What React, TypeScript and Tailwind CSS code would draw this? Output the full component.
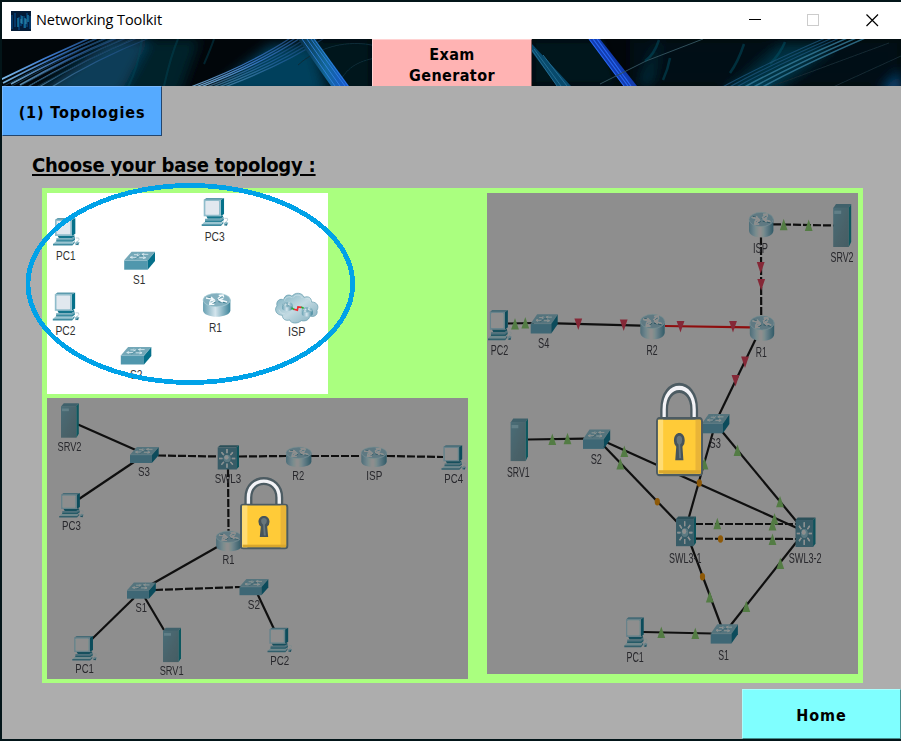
import React from 'react';

type Box = [number, number, number, number];
type Kind = 'pc' | 'switch' | 'router' | 'server' | 'l3' | 'cloud';
type Device = { kind: Kind; box: Box; label: string; lx: number; lw: number; ly: number };
type Link = { p: Box; dash?: boolean; red?: boolean };

const SIZE: Record<Kind, [number, number]> = {
  pc: [81, 84],
  switch: [92, 54],
  router: [84, 72],
  server: [52, 104],
  l3: [62, 70],
  cloud: [130, 90],
};

function Arrows() {
  return (
    <g fill="none" stroke="#f4fafc" strokeWidth="4">
      <path d="M14 13 L32 17 M47 26 L72 30 M44 19 L56 11 M26 33 L40 26" stroke="#3f7f92" strokeWidth="3" />
      <path d="M10 15 L32 19 M25 12 L34 20 L22 24" />
      <path d="M73 27 L50 20 M60 28 L49 20 L62 16" />
      <path d="M45 17 L58 7 M48 7 L61 6 L63 13" />
      <path d="M38 23 L24 32 M22 25 L21 34 L35 34" />
    </g>
  );
}

function RouterShape() {
  return (
    <g>
      <path d="M1 20 V52 C1 78 83 78 83 52 V20 Z" fill="url(#metal)" />
      <ellipse cx="42" cy="21" rx="41" ry="20" fill="#83b0bf" stroke="#acd0da" strokeWidth="2" />
      <Arrows />
    </g>
  );
}

function Shape({ kind }: { kind: Kind }) {
  if (kind === 'pc')
    return (
      <g>
        <path d="M6 6 L14 0 H66 L57 6 Z" fill="#5d9bae" />
        <path d="M57 6 L67 0 V48 L57 55 Z" fill="#05718a" />
        <rect x="6" y="5" width="51" height="50" fill="#8fbccb" />
        <rect x="11" y="9" width="41" height="41" rx="2" fill="#e1e8ef" />
        <path d="M14 55 H58 L64 52 V58 L56 62 H18 Z" fill="#14758c" />
        <path d="M10 62 H55 L66 56 V65 L57 72 H10 Z" fill="#6ba5b6" />
        <path d="M10 68 H57 L66 62 V67 L58 73 H10 Z" fill="#2c8499" />
        <path d="M8 72 H61 L57 80 H0 Z" fill="#9bc5d1" />
        <path d="M0 79 H58 L65 70 V76 L58 84 H0 Z" fill="#3f8ba0" />
        <path d="M68 61 H77 L78 66 L72 73" fill="none" stroke="#b4c9d1" strokeWidth="2.5" />
        <path d="M66 76 L72 71 L80 74 L76 82 L68 83 Z" fill="#8cbac7" />
        <path d="M67 81 L77 76 L76 83 Z" fill="#28748a" />
      </g>
    );
  if (kind === 'switch')
    return (
      <g>
        <path d="M0 26 L22 0 H92 L70 26 Z" fill="#74a8b8" />
        <rect x="0" y="26" width="70" height="28" fill="#5097ad" />
        <path d="M70 26 L92 0 V28 L70 54 Z" fill="#05708a" />
        <g fill="none" stroke="#dcebf0" strokeWidth="2.5">
          <path d="M29 9 H45 M39 6 L46 9 L38 12" />
          <path d="M53 8 H72 M60 5 L53 8 L59 11" />
          <path d="M18 17 H37 M25 14 L18 17 L25 20" />
          <path d="M45 18 H64 M57 15 L64 18 L56 21" />
        </g>
        <path d="M40 6 L48 12 H56 M31 22 L44 15" stroke="#397c90" strokeWidth="1.5" fill="none" />
        <path d="M0 26.5 H70 L91 1" stroke="#acced8" strokeWidth="1" fill="none" />
      </g>
    );
  if (kind === 'router') return <RouterShape />;
  if (kind === 'server')
    return (
      <g>
        <path d="M0 10 L8 0 H52 L44 10 Z" fill="#568e9e" />
        <rect x="0" y="9" width="45" height="95" fill="url(#tower)" />
        <path d="M45 9 L52 0 V92 L45 104 Z" fill="#05828f" />
        <rect x="3" y="16" width="20" height="8" fill="#86b8c6" />
      </g>
    );
  if (kind === 'l3')
    return (
      <g>
        <path d="M0 6 L7 0 H62 L54 6 Z" fill="#377584" />
        <path d="M54 6 L62 0 V62 L54 70 Z" fill="#057c8b" />
        <rect x="0" y="6" width="55" height="64" fill="#4a8699" />
        <g stroke="#edf7f9" strokeWidth="4">
          <path d="M27 11 V23 M27 53 V65 M4 38 H14 M41 38 H51 M11 20 L18 28 M44 20 L37 28 M11 56 L18 48 M44 56 L37 48" />
        </g>
        <circle cx="27.500" cy="38" r="10.500" fill="#7fb0bd" />
        <circle cx="25.500" cy="35" r="6" fill="#d3e6ec" />
      </g>
    );
  return (
    <g>
      <path
        d="M22 66 C4 66 -4 48 6 38 C2 22 16 14 26 20 C28 4 44 2 51 9 C60 -5 83 -2 87 12 C102 7 109 14 110 26 C127 26 133 40 126 51 C130 66 116 73 105 68 C101 84 86 84 79 82 C67 93 48 91 44 80 C32 84 22 77 22 66 Z"
        fill="url(#cloudFill)"
        stroke="#5f98aa"
        strokeWidth="2"
      />
      <path d="M28 22 C32 10 44 8 51 13 M54 13 C62 1 78 5 82 14 M91 17 C101 12 107 20 107 27 M12 49 C14 59 25 62 29 61" stroke="#d1e5eb" strokeWidth="2" fill="none" />
      <g transform="translate(21 26) scale(.38)"><RouterShape /></g>
      <g transform="translate(80 41) scale(.4)"><RouterShape /></g>
      <path d="M50 44 L58 49 M86 45 L78 41" stroke="#27ae35" strokeWidth="5" />
      <path d="M57 48 L67 51 L69 41 L79 42" stroke="#ed2b32" strokeWidth="5" fill="none" />
    </g>
  );
}

function Lock({ x, y, w, h }: { x: number; y: number; w: number; h: number }) {
  return (
    <g transform={`translate(${x} ${y}) scale(${w / 144} ${h / 220})`}>
      <path d="M25 88 V64 C25 -3 117 -3 117 64 V88" fill="none" stroke="#4c5b62" strokeWidth="24" />
      <path d="M25 88 V64 C25 -3 117 -3 117 64 V88" fill="none" stroke="#f3f3f7" strokeWidth="10" />
      <rect x="3" y="85" width="138" height="132" rx="7" fill="#ffcb38" stroke="#4c5b62" strokeWidth="6" />
      <rect x="6" y="88" width="16" height="126" fill="#ffdc73" />
      <rect x="121" y="88" width="16" height="126" fill="#e9b437" />
      <rect x="8" y="206" width="129" height="7" fill="#d9a72d" />
      <path d="M55 137 C55 113 88 113 88 137 Q88 147 81 151 L84 183 H59 L62 151 Q55 147 55 137 Z" fill="#46545b" />
      <path d="M63 134 C63 123 80 123 80 134 Q80 143 74 146 L77 178 H71 L69 146 Q63 143 63 134 Z" fill="#68767b" />
    </g>
  );
}

function Topology({
  view, devices, links = [], up = [], down = [], dots = [], font, dimmed, lock,
}: {
  view: Box; devices: Device[]; links?: Link[]; up?: number[][]; down?: number[][]; dots?: number[][];
  font: number; dimmed?: boolean; lock?: Box;
}) {
  const [x, y, w, h] = view;
  return (
    <svg className="block shrink-0 bg-white" width={w} height={h} viewBox={view.join(' ')}>
      {links.map(({ p, dash, red }, i) => (
        <line key={i} x1={p[0]} y1={p[1]} x2={p[2]} y2={p[3]} stroke={red ? '#ff1818' : '#1c1c1c'} strokeWidth="2.200" strokeDasharray={dash ? '8 2' : undefined} />
      ))}
      <g className={dimmed ? 'brightness-[1.25] saturate-[0.85]' : ''}>
        {devices.map((d, i) => (
          <g key={i} transform={`translate(${d.box[0]} ${d.box[1]}) scale(${d.box[2] / SIZE[d.kind][0]} ${d.box[3] / SIZE[d.kind][1]})`}>
            <Shape kind={d.kind} />
          </g>
        ))}
      </g>
      {devices.map((d, i) => (
        <text key={i} x={d.lx} y={d.ly} textLength={d.lw} lengthAdjust="spacingAndGlyphs" fontSize={font} fill={dimmed ? '#484850' : '#303030'} fontFamily="Liberation Sans, sans-serif">{d.label}</text>
      ))}
      {up.map(([a, b], i) => <path key={i} d={`M${a - 3.9} ${b + 5.5} L${a} ${b - 6} L${a + 3.9} ${b + 5.5} Z`} fill="#96df7a" />)}
      {down.map(([a, b], i) => <path key={i} d={`M${a - 3.9} ${b - 5.5} L${a} ${b + 6} L${a + 3.9} ${b - 5.5} Z`} fill="#ef4963" />)}
      {dots.map(([a, b], i) => <ellipse key={i} cx={a} cy={b} rx="2.600" ry="3.700" fill="#ffa00e" />)}
      {dimmed && <rect x={x} y={y} width={w} height={h} fill="#000" fillOpacity="0.443" />}
      {lock && <Lock x={lock[0]} y={lock[1]} w={lock[2]} h={lock[3]} />}
    </svg>
  );
}

const d = (kind: Kind, box: Box, label: string, lx: number, lw: number, ly: number): Device => ({ kind, box, label, lx, lw, ly });

const basic: Device[] = [
  d('pc', [53, 218, 27, 27.5], 'PC1', 56, 19.5, 260),
  d('pc', [52.8, 292.5, 27, 28], 'PC2', 55.5, 20, 335),
  d('pc', [201.7, 198, 27, 28], 'PC3', 204.7, 20, 241),
  d('switch', [124.2, 251.7, 30.8, 18], 'S1', 133, 12.3, 284),
  d('switch', [120.8, 347, 30.5, 17.5], 'S2', 130, 12.5, 379),
  d('router', [202.7, 293, 28, 24], 'R1', 209, 13, 331.5),
  d('cloud', [275, 293.3, 43.3, 30], 'ISP', 288, 17.5, 335.5),
];

const medium: Device[] = [
  d('server', [61, 403.2, 17.8, 34.5], 'SRV2', 57.5, 24, 451),
  d('switch', [130, 447, 28.7, 16], 'S3', 138, 12, 476),
  d('l3', [217.7, 445.3, 21.3, 24.2], 'SWL3', 214.7, 26.5, 482.7),
  d('pc', [59.2, 493, 25, 24.5], 'PC3', 62, 18.8, 530),
  d('router', [215.8, 530.7, 26, 20.7], 'R1', 222.5, 12, 564),
  d('switch', [127, 582.5, 28.8, 16.2], 'S1', 135.5, 11.5, 611.5),
  d('switch', [239.5, 579, 28.8, 16.2], 'S2', 247.8, 12.2, 608.5),
  d('pc', [72.3, 636, 25, 24.5], 'PC1', 75.3, 18.5, 673),
  d('server', [163, 627.8, 18, 34.3], 'SRV1', 159.7, 24, 675),
  d('pc', [267.5, 627.7, 25, 24.5], 'PC2', 270.3, 19, 665),
  d('router', [285.7, 446.7, 26, 20.6], 'R2', 292.3, 12, 480),
  d('router', [361, 446.7, 26, 20.6], 'ISP', 366.3, 16, 480),
  d('pc', [441.5, 445.3, 25, 24.5], 'PC4', 444.3, 18.7, 482.7),
];

const mediumLinks: Link[] = [
  { p: [78, 424.5, 138, 451] }, { p: [134, 462, 79, 499] }, { p: [158, 455.5, 218, 456.5], dash: true },
  { p: [239, 456.5, 286, 456], dash: true }, { p: [311, 456, 361, 456], dash: true }, { p: [387, 456, 443, 457], dash: true },
  { p: [228, 469, 228.5, 531], dash: true }, { p: [218, 546.5, 152, 584] }, { p: [155, 590, 241, 587], dash: true },
  { p: [134, 598, 92, 639] }, { p: [145, 598, 164, 630] }, { p: [257.5, 594, 274, 629] },
];

const advanced: Device[] = [
  d('pc', [488, 310, 24, 30.3], 'PC2', 490.7, 17.5, 355.3),
  d('switch', [530.7, 314.3, 27, 19.2], 'S4', 538, 11.3, 348),
  d('router', [640, 314, 25, 25.5], 'R2', 646.5, 11.2, 354.7),
  d('router', [748.7, 212, 25, 25.6], 'ISP', 753, 15, 253),
  d('server', [833.2, 204, 18, 43], 'SRV2', 830.5, 23, 262),
  d('router', [749.5, 315.5, 25, 25.6], 'R1', 755.7, 11, 356.7),
  d('server', [510.6, 418.4, 17.4, 42.7], 'SRV1', 507, 22.5, 476.5),
  d('switch', [583, 429.6, 27.2, 19.3], 'S2', 590.7, 11.3, 463.5),
  d('switch', [702.2, 414, 27.2, 19.3], 'S3', 709.5, 11.3, 448),
  d('l3', [676, 516.5, 20, 29.7], 'SWL3-1', 669, 32.5, 562.5),
  d('l3', [795.5, 517.5, 20, 29.5], 'SWL3-2', 788.7, 33, 562.5),
  d('pc', [624.3, 617.3, 23.5, 30], 'PC1', 626.5, 17.3, 662),
  d('switch', [710.7, 624.3, 27.2, 19.3], 'S1', 718.2, 10.7, 659.5),
];

const advancedLinks: Link[] = [
  { p: [508, 323.5, 534, 323] }, { p: [557, 323.3, 641, 325.7] }, { p: [665, 326, 750, 327.3], red: true },
  { p: [761, 237, 761.2, 316], dash: true }, { p: [773, 224.3, 834, 225.5], dash: true },
  { p: [755.7, 339, 719, 415] }, { p: [722.5, 432, 797, 522] }, { p: [713, 432, 689, 517] },
  { p: [607, 442.5, 797, 528] }, { p: [604, 446, 677, 522] }, { p: [528, 439.5, 584, 438.7] },
  { p: [695, 524, 796, 524], dash: true }, { p: [695, 538.7, 796, 539], dash: true },
  { p: [691, 545, 721, 625.5] }, { p: [796.5, 542, 730, 626] }, { p: [643, 632, 712, 633.5] },
];

const upMarks = [[515, 324], [525.3, 323], [783.7, 224.7], [808.7, 225.5], [552.3, 439.5], [567.5, 438.7], [624.3, 451.5], [620.3, 464], [737.5, 450.5], [704.5, 464], [780, 501.7], [774.5, 519], [772.5, 525], [772.5, 539.5], [717.3, 523.7], [780.3, 563.5], [746.3, 606.5], [709.8, 597], [661.3, 632.5], [695.3, 633.5]];
const downMarks = [[578.3, 324], [623.7, 325], [680.5, 326.5], [733, 326.5], [760.7, 267.5], [761.2, 284.5], [745, 362], [735.5, 380.5]];
const dotMarks = [[657.3, 501.7], [699.3, 483], [720.5, 539], [702.5, 576.7]];

function Defs() {
  return (
    <svg className="absolute h-0 w-0">
      <defs>
        <linearGradient id="metal"><stop offset="0" stopColor="#68a0b2" /><stop offset=".45" stopColor="#d4e5ed" /><stop offset="1" stopColor="#3d849a" /></linearGradient>
        <linearGradient id="tower" x1="0" y1="0" x2="1" y2="1"><stop stopColor="#629fb1" /><stop offset=".6" stopColor="#648e9a" /><stop offset="1" stopColor="#5d8792" /></linearGradient>
        <linearGradient id="cloudFill" x1="0" y1="0" x2="1" y2="1"><stop stopColor="#78aebe" /><stop offset=".5" stopColor="#c3dae2" /><stop offset="1" stopColor="#7eacbc" /></linearGradient>
      </defs>
    </svg>
  );
}

function Banner() {
  return (
    <svg className="block" width="899" height="47" viewBox="2 39 899 47">
      <defs>
        <filter id="soft" x="-30%" y="-50%" width="160%" height="200%"><feGaussianBlur stdDeviation="6" /></filter>
        <filter id="hair" x="-10%" y="-10%" width="120%" height="120%"><feGaussianBlur stdDeviation=".35" /></filter>
        <linearGradient id="streak" x1="0" y1="1" x2="1" y2="0"><stop stopColor="#86c4ee" /><stop offset=".55" stopColor="#3c78cc" /><stop offset="1" stopColor="#1f4c80" /></linearGradient>
        <linearGradient id="fallA" x1="0" x2="1" y1="0" y2="0"><stop stopColor="#082d42" /><stop offset=".55" stopColor="#13689a" /><stop offset="1" stopColor="#1854d6" /></linearGradient>
      </defs>
      <rect x="2" y="39" width="899" height="47" fill="#01060a" />
      <g filter="url(#soft)">
        <path d="M35 95 L110 39 H165 L125 95 Z" fill="#073d58" />
        <path d="M120 95 L150 39 H200 L180 95 Z" fill="#02202b" />
        <path d="M205 95 L270 45 H315 L330 95 Z" fill="#06405c" />
        <path d="M325 95 L310 39 H372 V95 Z" fill="#02141b" />
        <path d="M532 39 H600 L620 86 H532 Z" fill="#03171f" />
        <path d="M640 86 L660 35 L650 86 M722 96 L780 45 H835 L770 96 Z" fill="#084560" />
        <path d="M630 39 H901 V86 H630 Z" fill="#031c26" opacity=".5" />
        <path d="M880 92 L901 72 V95 Z" fill="#0c4d80" />
      </g>
      <g fill="none" filter="url(#hair)">
        {[0, 7, 15, 24, 33, 43, 54].map((n, i) => (
          <path key={n} d={`M${-4 + n} ${82 + i} Q${42 + n} 59 ${90 + n * 1.1} 38`} stroke="url(#streak)" strokeWidth={i < 4 ? 1.9 : 1.3} opacity={1 - i * 0.1} />
        ))}
        {[4, 12, 20, 29, 38].map((n) => (
          <path key={n} d={`M${-2 + n} 87 Q${44 + n} 62 ${92 + n * 1.1} 38`} stroke="#163f55" strokeWidth=".8" />
        ))}
        {[0, 5, 10, 16, 22, 28, 34].map((n, i) => (
          <path key={n} d={`M${188 + n} 88 Q${250 + n} 65 ${292 + n} 37`} stroke="url(#streak)" strokeWidth="1.3" opacity={i < 3 ? 0.85 : 0.45} />
        ))}
        <path d="M128 87 Q138 68 142 39 M164 86 Q171 55 178 39 M204 64 Q211 48 214 39" stroke="#0b4659" strokeWidth="2" opacity=".45" />
        <path d="M298 65 C318 47 348 39 376 46 M338 86 C345 68 358 61 376 58" stroke="#0e2c38" strokeWidth="1" />
      </g>
      <path d="M298 39 H315 L349 86 H331 Z" fill="url(#fallA)" />
      <path d="M302 39 L335 86 M307 39 L340 86 M311 39 L345 86 M314 39 L348 86" stroke="#3387e7" strokeWidth=".8" />
      <path d="M532 44 L571 86 H557 L532 52 Z" fill="#084a6c" />
      <path d="M532 50 L557 86 M534 49 L561 86 M543 55 L567 86" stroke="#246c91" strokeWidth="1" />
      <path d="M589 39 H600 L637 86 H624 Z" fill="#123caf" />
      <path d="M589 39 L624 86 M593 39 L628 86 M597 39 L631 86" stroke="#2766f2" strokeWidth="1.2" />
      <path d="M600 84 L646 61 L703 39" stroke="#31505b" strokeWidth="1" fill="none" />
      <g filter="url(#hair)" fill="none">
        <path d="M645 61 Q654 55 659 40 M663 80 Q668 69 670 58 M730 73 Q738 62 744 44 M770 64 Q780 54 785 42" stroke="#0b566c" strokeWidth="2.5" opacity=".45" />
        {[0, 7, 14, 22, 31, 40].map((n, i) => (
          <path key={n} d={`M${717 + n} 90 Q${762 + n} 65 ${830 + n} 36`} stroke={i > 2 ? '#367c9b' : '#1a5278'} strokeWidth={i > 2 ? 1.5 : 1.1} opacity=".8" />
        ))}
        <path d="M767 88 L889 43 M833 87 L901 56" stroke="#152932" strokeWidth="1" />
      </g>
    </svg>
  );
}

function TitleBar() {
  return (
    <header className="flex h-[37px] shrink-0 items-center bg-white pl-[9px]">
      <svg width="20" height="20" viewBox="0 0 20 20">
        <rect width="20" height="20" fill="#031b37" />
        <path d="M1 4 V18 M4 2 V16 M8 6 V19 M10 4 V15 M13 5 V17 M16 2 V16 M19 5 V18" stroke="#074b87" strokeWidth="1.2" />
        <path d="M7 7 V16 M11 5 V13 M14 7 V17 M17 4 V11" stroke="#167da9" strokeWidth="2" opacity=".7" />
        <path d="M10 8 V12 M15 8 V13" stroke="#54a8c4" strokeWidth=".7" />
      </svg>
      <span className="ml-[5px] whitespace-nowrap pb-[2px] font-['Open_Sans',sans-serif] text-[14.5px] leading-[20px] tracking-[-0.08px] text-black">Networking Toolkit</span>
      <svg className="ml-auto mr-[22px]" width="130" height="13" viewBox="0 0 130 13" shapeRendering="crispEdges">
        <path d="M0 5.5 H12" stroke="#000" />
        <rect x="58.5" y=".5" width="11" height="11" fill="none" stroke="#ccc" />
        <path d="M117.5 .5 L129 12 M129 .5 L117.5 12" stroke="#000" strokeWidth="1.2" shapeRendering="auto" />
      </svg>
    </header>
  );
}

export default function App() {
  return (
    <div className="relative flex h-[741px] w-[901px] flex-col overflow-hidden bg-[#031519] pb-[2px] pl-[2px] pt-[2px] text-black">
      <Defs />
      <TitleBar />
      <div className="relative h-[47px] shrink-0">
        <Banner />
        <button className="absolute left-[370px] top-0 h-[47px] w-[160px] border-l border-r border-t border-l-[#ffd2d2] border-r-[#805a5a] border-t-[#ffd2d2] bg-[#ffb3b3] pt-[4px] text-center font-['DejaVu_Sans_Condensed','DejaVu_Sans',sans-serif] text-[16px] font-bold leading-[21px] tracking-[0.4px]">
          Exam<br />Generator
        </button>
      </div>
      <main className="flex min-h-0 flex-1 flex-col bg-[#adadad]">
        <button className="h-[50px] w-[160px] shrink-0 border border-b-[#24466d] border-l-[#7abaff] border-r-[#24466d] border-t-[#7abaff] bg-[#55aaff] pt-[3px] font-['DejaVu_Sans_Condensed','DejaVu_Sans',sans-serif] text-[16px] font-bold tracking-[0.88px]">(1) Topologies</button>
        <h1 className="ml-[30px] mt-[16px] h-[26px] whitespace-nowrap font-['DejaVu_Sans_Condensed','DejaVu_Sans',sans-serif] text-[20px] font-bold leading-[26px] tracking-[-0.2px] underline decoration-2 underline-offset-2">Choose your base topology :</h1>
        <section className="ml-[40px] mt-[10px] flex h-[495px] w-[821px] shrink-0 gap-[19px] bg-[#aaff7f] p-[5px]">
          <div className="flex w-[421px] shrink-0 flex-col gap-[4px]">
            <Topology view={[47, 193, 281, 201]} devices={basic} font={12.5} />
            <Topology view={[47, 398, 421, 281]} devices={medium} links={mediumLinks} font={12.5} dimmed lock={[240, 476.5, 48.3, 72.8]} />
          </div>
          <Topology view={[487, 193, 371, 481]} devices={advanced} links={advancedLinks} up={upMarks} down={downMarks} dots={dotMarks} font={13.8} dimmed lock={[656, 382, 47, 94.2]} />
        </section>
        <button className="ml-auto mt-[6px] h-[50px] w-[159px] shrink-0 border border-b-[#458d8d] border-l-[#a9ffff] border-r-[#458d8d] border-t-[#a9ffff] bg-[#7fffff] pt-[3px] font-['DejaVu_Sans_Condensed','DejaVu_Sans',sans-serif] text-[16px] font-bold tracking-[0.9px]">Home</button>
      </main>
      <svg className="pointer-events-none absolute left-[25px] top-[183px]" width="331" height="203" viewBox="25 183 331 203">
        <ellipse cx="190.3" cy="284" rx="162.4" ry="98.5" fill="none" stroke="#00a2e8" strokeWidth="4.8" shapeRendering="crispEdges" />
      </svg>
    </div>
  );
}
